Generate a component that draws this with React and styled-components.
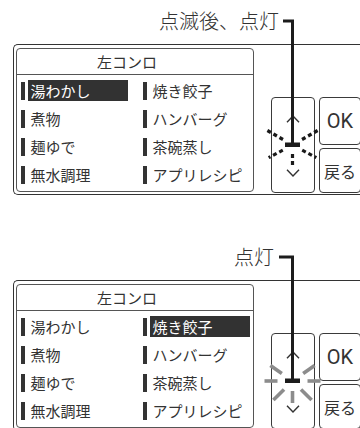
import React from "react";
import styled, { createGlobalStyle } from "styled-components";

const GlobalStyle = createGlobalStyle`
  html, body {
    margin: 0;
    padding: 0;
    background: #fff;
    overflow: hidden;
  }
  body {
    font-family: "Noto Sans CJK JP", "Noto Sans", sans-serif;
    color: #333;
  }
`;

const MENU = [
  "湯わかし",
  "焼き餃子",
  "煮物",
  "ハンバーグ",
  "麺ゆで",
  "茶碗蒸し",
  "無水調理",
  "アプリレシピ",
];

const CX = 292.5;
const CY = 145;

// rays around the indicator lamp: [angle, inner r, outer r]
const BLINK_RAYS = [
  [150, 11, 29],
  [30, 11, 29],
  [208, 11, 27],
  [332, 11, 27],
  [270, 9, 20],
];

const LIT_RAYS = [
  [0, 15, 28],
  [180, 15, 28],
  [35, 13, 27],
  [145, 13, 27],
  [225, 12, 27],
  [315, 12, 27],
  [270, 10, 22],
];

const rayPoints = ([a, r1, r2]) => {
  const rad = (a * Math.PI) / 180;
  return {
    x1: CX + r1 * Math.cos(rad),
    y1: CY - r1 * Math.sin(rad),
    x2: CX + r2 * Math.cos(rad),
    y2: CY - r2 * Math.sin(rad),
  };
};

const Indicator = ({ blinking, leaderX }) => (
  <Overlay width="360" height="236" viewBox="0 0 360 236">
    {(blinking ? BLINK_RAYS : LIT_RAYS).map((r, i) => (
      <line
        key={i}
        {...rayPoints(r)}
        stroke={blinking ? "#1a1a1a" : "#8c8c8c"}
        strokeWidth={blinking ? 3.2 : 3.6}
        strokeDasharray={blinking ? "4 3" : undefined}
      />
    ))}
    <path
      d={`M${leaderX} 21 H${CX} V143`}
      fill="none"
      stroke="#1c1c1c"
      strokeWidth="3"
    />
    <rect x={CX - 7.5} y={CY - 2.5} width="15" height="4.5" fill="#1c1c1c" />
  </Overlay>
);

const Chevron = ({ up }) => (
  <svg width="14" height="8" viewBox="0 0 14 8">
    <polyline
      points={up ? "1,7.3 7,1 13,7.3" : "1,0.7 7,7 13,0.7"}
      fill="none"
      stroke="#333"
      strokeWidth="1.4"
    />
  </svg>
);

const Screen = ({ caption, selected, blinking, captionPad, leaderX }) => (
  <Section>
    <Callout $pad={captionPad}>{caption}</Callout>
    <Panel>
      <MenuBox>
        <MenuTitle>左コンロ</MenuTitle>
        <MenuGrid>
          {MENU.map((label) => (
            <MenuItem key={label}>
              <Bar />
              <Label $active={label === selected}>{label}</Label>
            </MenuItem>
          ))}
        </MenuGrid>
      </MenuBox>
      <Controls>
        <ArrowButton>
          <Chevron up />
          <Chevron />
        </ArrowButton>
        <SideButtons>
          <KeyButton $h={48}>
            <OkText>OK</OkText>
          </KeyButton>
          <KeyButton $h={45}>戻る</KeyButton>
        </SideButtons>
      </Controls>
    </Panel>
    <Indicator blinking={blinking} leaderX={leaderX} />
  </Section>
);

export default function App() {
  return (
    <>
      <GlobalStyle />
      <Page>
        <Screen
          caption="点滅後、点灯"
          selected="湯わかし"
          blinking
          captionPad={81}
          leaderX={283}
        />
        <Screen
          caption="点灯"
          selected="焼き餃子"
          captionPad={86}
          leaderX={279}
        />
      </Page>
    </>
  );
}

const Page = styled.div`
  width: 360px;
  height: 428px;
  overflow: hidden;
`;

const Section = styled.div`
  position: relative;
  width: 360px;
  height: 236px;
  overflow: hidden;
`;

const Overlay = styled.svg`
  position: absolute;
  left: 0;
  top: 0;
  pointer-events: none;
`;

const Callout = styled.div`
  height: 44px;
  box-sizing: border-box;
  display: flex;
  justify-content: flex-end;
  padding: 11px ${(p) => p.$pad}px 0 0;
  font-size: 20px;
  font-weight: 300;
  line-height: 20px;
  color: #333;
`;

const Panel = styled.div`
  margin-left: 13px;
  width: 380px;
  height: 151px;
  box-sizing: border-box;
  border: 1.5px solid #333;
  border-right: none;
  border-radius: 5px 0 0 5px;
  padding: 2px 0 1px 2px;
  display: flex;
  align-items: flex-end;
`;

const MenuBox = styled.div`
  width: 238px;
  height: 144px;
  box-sizing: border-box;
  border: 1px solid #555;
  border-radius: 4px;
  margin-bottom: 1px;
  align-self: flex-start;
  margin-top: 1px;
`;

const MenuTitle = styled.div`
  height: 26px;
  box-sizing: border-box;
  border-bottom: 1px solid #555;
  padding-right: 16px;
  font-size: 15px;
  line-height: 25px;
  text-align: center;
  color: #333;
`;

const MenuGrid = styled.div`
  display: grid;
  grid-template-columns: 107px 107px;
  grid-auto-rows: 21px;
  column-gap: 15px;
  row-gap: 7px;
  padding: 5px 0 0 4px;
`;

const MenuItem = styled.div`
  display: flex;
  align-items: center;
  gap: 3px;
`;

const Bar = styled.div`
  flex: none;
  width: 3.5px;
  height: 18px;
  background: #333;
`;

const Label = styled.div`
  flex: 1;
  height: 21px;
  padding-left: 3px;
  font-size: 15px;
  line-height: 21px;
  white-space: nowrap;
  color: ${(p) => (p.$active ? "#fff" : "#333")};
  background: ${(p) => (p.$active ? "#323232" : "transparent")};
`;

const Controls = styled.div`
  display: flex;
  gap: 4px;
  margin-left: 17px;
`;

const ArrowButton = styled.div`
  width: 44px;
  height: 96px;
  box-sizing: border-box;
  border: 1px solid #3a3a3a;
  border-radius: 4px;
  display: flex;
  flex-direction: column;
  align-items: center;
  justify-content: space-between;
  padding: 17px 0 15px;
`;

const SideButtons = styled.div`
  display: flex;
  flex-direction: column;
  gap: 3px;
`;

const KeyButton = styled.div`
  width: 42px;
  height: ${(p) => p.$h}px;
  box-sizing: border-box;
  border: 1px solid #3a3a3a;
  border-radius: 4px;
  display: flex;
  align-items: center;
  justify-content: center;
  font-size: 16px;
  color: #333;
`;

const OkText = styled.span`
  font-family: Roboto, "Liberation Sans", sans-serif;
  font-size: 20px;
  font-weight: 400;
  color: #333;
`;
